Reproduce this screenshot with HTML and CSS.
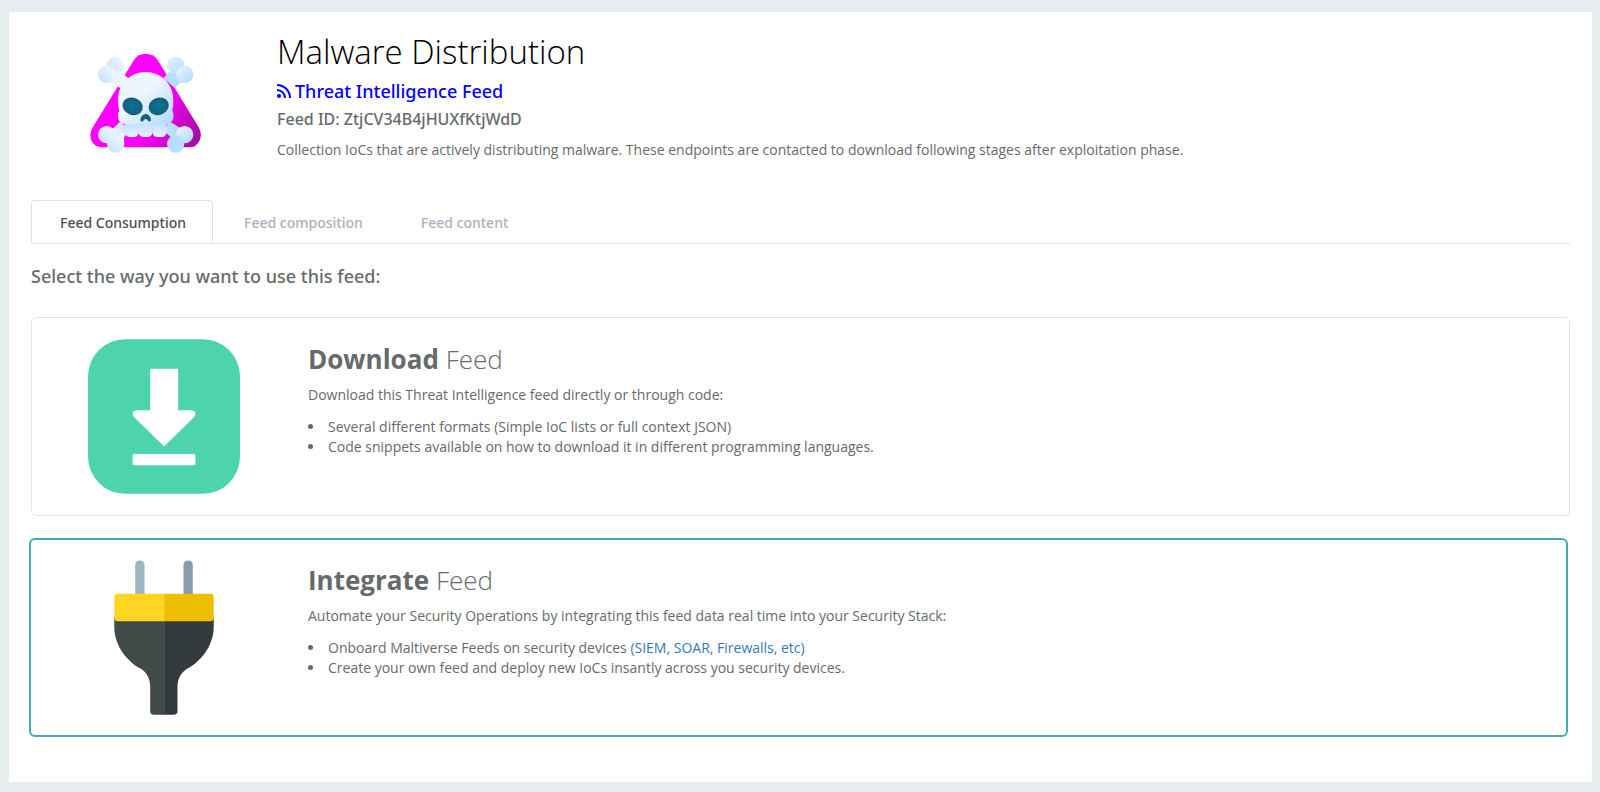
FILE: index.html
```html
<!DOCTYPE html>
<html lang="en">
<head>
    <meta charset="utf-8">
    <title>Malware Distribution</title>
    <link rel="stylesheet" href="styles.css">
</head>
<body>
  <main class="panel">
    <header class="feed-header">
      <div class="feed-logo">
        <svg class="skull-icon" viewBox="270 160 336 300" aria-hidden="true">
          <defs>
            <linearGradient id="tri" gradientUnits="userSpaceOnUse" x1="420" y1="330" x2="590" y2="430">
              <stop offset="0" stop-color="#ff00ff"/>
              <stop offset="0.3" stop-color="#f400f4"/>
              <stop offset="1" stop-color="#a10fa0"/>
            </linearGradient>
            <linearGradient id="bone" x1="0" y1="0" x2="1" y2="1">
              <stop offset="0.2" stop-color="#e0eeff"/>
              <stop offset="1" stop-color="#b2daff"/>
            </linearGradient>
            <linearGradient id="boneLeft" x1="1" y1="0" x2="0" y2="1">
              <stop offset="0.2" stop-color="#ecf4ff"/>
              <stop offset="1" stop-color="#c2e0ff"/>
            </linearGradient>
            <linearGradient id="head" gradientUnits="userSpaceOnUse" x1="400" y1="260" x2="505" y2="370">
              <stop offset="0.25" stop-color="#eef5ff"/>
              <stop offset="1" stop-color="#b5dbff"/>
            </linearGradient>
            <linearGradient id="tooth" x1="0" y1="0" x2="0" y2="1">
              <stop offset="0" stop-color="#c4e2ff"/>
              <stop offset="1" stop-color="#e6f2ff"/>
            </linearGradient>
            <radialGradient id="eye">
              <stop offset="0" stop-color="#08789a"/>
              <stop offset="1" stop-color="#155e75"/>
            </radialGradient>
          </defs>
          <path fill="url(#tri)" d="M402 181Q414 162 437 162Q460 162 473 181L597 384Q606 402 600 420Q590 443 567 443H306Q283 443 274 422Q267 403 277 385Z"/>
          <!-- crossed bones -->
          <path fill="#e6f1ff" d="M330 244L352 209L388 238L364 268Z"/>
          <circle fill="url(#boneLeft)" cx="346" cy="197" r="26"/>
          <circle fill="url(#boneLeft)" cx="320" cy="224" r="26"/>
          <path fill="#eaf3ff" d="M338 214L358 211L378 236L360 263L334 242Z"/>
          <path fill="#b9dcff" d="M516 208L552 240L524 264L490 236Z"/>
          <circle fill="url(#bone)" cx="527" cy="197" r="26"/>
          <circle fill="url(#bone)" cx="554" cy="224" r="26"/>
          <path fill="#cfe6ff" d="M338 388L360 366L390 390L364 424Z"/>
          <circle fill="url(#boneLeft)" cx="320" cy="405" r="26"/>
          <circle fill="url(#boneLeft)" cx="347" cy="433" r="26"/>
          <path fill="#e5f1ff" d="M334 389L350 380L372 402V424L348 430Z"/>
          <path fill="#bcdeff" d="M510 366L542 386L522 420L488 392Z"/>
          <circle fill="url(#bone)" cx="554" cy="405" r="26"/>
          <circle fill="#b7ddff" cx="527" cy="433" r="26"/>
          <!-- skull -->
          <path fill="url(#head)" d="M437 217C482 217 520 252 520 300Q520 318 517 334Q524 344 520 354C518 367 507 374 496 375V385H378V375C366 373 354 366 355 352Q351 342 358 334Q354 318 354 300C354 252 392 217 437 217Z"/>
          <path fill="url(#tooth)" d="M375 374H417V398Q414 412 402 412H391Q376 412 375 398Z"/>
          <path fill="url(#tooth)" d="M416 374H458V398Q455 412 442 412H431Q417 412 416 398Z"/>
          <path fill="url(#tooth)" d="M457 374H500V398Q498 412 485 412H473Q459 412 457 398Z"/>
          <ellipse fill="url(#eye)" cx="398" cy="320" rx="31" ry="26" transform="rotate(20 398 320)"/>
          <ellipse fill="url(#eye)" cx="476" cy="320" rx="31" ry="26" transform="rotate(-20 476 320)"/>
          <path fill="#126480" d="M422 364C419 352 430 343 437 343C445 343 455 352 452 364Q445 369 442 360Q437 356 432 360Q429 369 422 364Z"/>
        </svg>
      </div>
      <div class="feed-info">
        <h1 class="feed-title">Malware Distribution</h1>
        <p class="feed-type">
          <svg class="rss-icon" viewBox="0 0 14 14" aria-hidden="true">
            <circle cx="2" cy="12" r="2"/>
            <path d="M0 6A8 8 0 0 1 8 14M0 1A13 13 0 0 1 13 14"/>
          </svg>
          Threat Intelligence Feed
        </p>
        <p class="feed-id">Feed ID: ZtjCV34B4jHUXfKtjWdD</p>
        <p class="feed-text">Collection IoCs that are actively distributing malware. These endpoints are contacted to download following stages after exploitation phase.</p>
      </div>
    </header>

    <div class="tabs" role="tablist">
      <button class="tab active" type="button" role="tab" aria-selected="true">Feed Consumption</button>
      <button class="tab" type="button" role="tab" aria-selected="false">Feed composition</button>
      <button class="tab" type="button" role="tab" aria-selected="false">Feed content</button>
    </div>

    <h2 class="select-title">Select the way you want to use this feed:</h2>

    <section class="card">
      <div class="card-icon">
        <svg viewBox="203 88 457 465" aria-hidden="true">
          <rect x="203" y="88" width="457" height="465" rx="112" fill="#4dd4ac"/>
          <path fill="#fff" d="M393 177H471Q474 177 474 180V302H514Q526 304 526 314Q526 318 522 322L435 408Q432 412 429 408L341 322Q337 318 337 314Q337 304 349 302H390V180Q390 177 393 177Z"/>
          <rect x="337" y="433" width="189" height="34" rx="5" fill="#fff"/>
        </svg>
      </div>
      <div class="card-body">
        <h3 class="card-title"><strong>Download</strong> Feed</h3>
        <p class="card-text">Download this Threat Intelligence feed directly or through code:</p>
        <ul class="card-list">
          <li>Several different formats (Simple IoC lists or full context JSON)</li>
          <li>Code snippets available on how to download it in different programming languages.</li>
        </ul>
      </div>
    </section>

    <section class="card selected">
      <div class="card-icon">
        <svg viewBox="203 90 457 465" aria-hidden="true">
          <path fill="#9bb7c1" d="M345 195V104Q346 91 359 91Q371 91 373 104V195Z"/>
          <path fill="#889eae" d="M490 195V104Q492 91 504 91Q517 91 518 104V195Z"/>
          <path fill="#3f4a49" d="M282 262V290C282 342 315 390 358 414C380 426 390 446 390 470V545Q391 555 401 555H433V262Z"/>
          <path fill="#323a3b" d="M581 262V290C581 342 548 390 505 414C483 426 472 446 472 470V545Q471 555 461 555H432V262Z"/>
          <path fill="#ffd422" d="M292 191H433V274H292Q282 273 282 263V201Q282 191 292 191Z"/>
          <path fill="#eebf00" d="M432 191H571Q581 191 581 201V263Q581 273 571 274H432Z"/>
        </svg>
      </div>
      <div class="card-body">
        <h3 class="card-title"><strong>Integrate</strong> Feed</h3>
        <p class="card-text">Automate your Security Operations by integrating this feed data real time into your Security Stack:</p>
        <ul class="card-list">
          <li>Onboard Maltiverse Feeds on security devices <a href="#">(SIEM, SOAR, Firewalls, etc)</a></li>
          <li>Create your own feed and deploy new IoCs insantly across you security devices.</li>
        </ul>
      </div>
    </section>
  </main>
</body>
</html>
```
FILE: styles.css
```css
* {
  box-sizing: border-box;
}
body {
  margin: 0;
  padding: 12px 8px 10px 9px;
  min-height: 100vh;
  display: flex;
  background-color: #e7ecef;
  color: #676a6c;
  font-family: "Open Sans", "Noto Sans", sans-serif;
  font-size: 14px;
  line-height: 20px;
}
h1, h2, h3, p, ul {
  margin: 0;
}
.panel {
  flex: 1;
  background-color: #fff;
  padding: 20px 22px;
}

/* header */
.feed-header {
  display: flex;
  height: 168px;
}
.feed-logo {
  width: 246px;
  padding: 21px 0 0 59px;
}
.skull-icon {
  display: block;
  width: 112px;
  height: 100px;
}
.feed-title {
  color: #000;
  font-size: 33px;
  font-weight: 300;
  line-height: 40px;
}
.feed-type {
  display: flex;
  align-items: center;
  gap: 4px;
  margin-top: 6px;
  color: #0000ff;
  font-family: "Noto Sans", "Open Sans", sans-serif;
  font-size: 18px;
  font-weight: 500;
  line-height: 26px;
}
.rss-icon {
  width: 14px;
  height: 14px;
  fill: #0000ff;
}
.rss-icon path {
  fill: none;
  stroke: #0000ff;
  stroke-width: 2;
}
.feed-id {
  margin-top: 5px;
  font-family: "Noto Sans", "Open Sans", sans-serif;
  font-size: 16px;
  font-weight: 500;
}
.feed-text {
  margin-top: 11px;
}

/* tabs */
.tabs {
  display: flex;
  gap: 2px;
  border-bottom: 1px solid #e3e5e6;
}
.tab {
  height: 43px;
  padding: 0 26px 0 28px;
  border: 1px solid transparent;
  border-bottom: 0;
  border-radius: 4px 4px 0 0;
  background: none;
  color: #a7b1c2;
  font: 500 14px "Noto Sans", "Open Sans", sans-serif;
  cursor: pointer;
}
.tab.active {
  border-color: #dfe1e2;
  color: #4b4d4f;
}
.select-title {
  margin: 20px 0 29px;
  font-family: "Noto Sans", "Open Sans", sans-serif;
  font-size: 18px;
  font-weight: 500;
  line-height: 24px;
}

/* cards */
.card {
  display: flex;
  min-height: 199px;
  margin-bottom: 22px;
  padding: 21px 0;
  border: 1px solid #e3e5e6;
  border-radius: 5px;
}
.card.selected {
  margin-left: -2px;
  margin-right: 2px;
  padding: 20px 0 20px 1px;
  border: 2px solid #45aab8;
  border-radius: 6px;
}
.card-icon {
  width: 276px;
  padding-left: 56px;
}
.card-icon svg {
  display: block;
  width: 152px;
  height: 155px;
}
.card-title {
  margin-bottom: 6px;
  font-size: 26px;
  font-weight: 300;
  line-height: 40px;
}
.card-title strong {
  font-weight: 700;
}
.card-list {
  margin-top: 12px;
  padding-left: 17px;
}
.card-list li {
  padding-left: 3px;
}
.card-list a {
  color: #337ab7;
  text-decoration: none;
}
```
